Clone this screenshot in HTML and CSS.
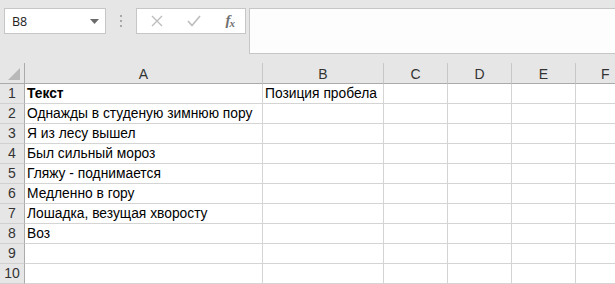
FILE: index.html
```html
<!DOCTYPE html>
<html lang="ru">
<head>
    <meta charset="UTF-8">
    <title>Книга1 - Excel</title>
    <link rel="stylesheet" href="styles.css">
</head>
<body>
    <div class="toolbar">
        <div class="name-box">
            <span>B8</span>
            <svg class="caret" width="9" height="5" viewBox="0 0 9 5"><path d="M0 0h9L4.5 5z" fill="#6b6b6b"/></svg>
        </div>
        <div class="grip"><i></i><i></i><i></i></div>
        <div class="fx-buttons">
            <svg width="12" height="12" viewBox="0 0 12 12"><path d="M1 1l10 10M11 1L1 11" stroke="#bdbdbd" stroke-width="1.4" fill="none"/></svg>
            <svg width="14" height="12" viewBox="0 0 14 12"><path d="M1 6l4 4.5L13 1" stroke="#bdbdbd" stroke-width="1.6" fill="none"/></svg>
            <span class="fx">f<sub>x</sub></span>
        </div>
        <div class="formula-input"></div>
    </div>
    <div class="sheet">
        <div class="corner"><span class="tri"></span></div>
        <div class="col-head">A</div>
        <div class="col-head">B</div>
        <div class="col-head">C</div>
        <div class="col-head">D</div>
        <div class="col-head">E</div>
        <div class="col-head last">F</div>

        <div class="row-head">1</div><div class="cell bold">Текст</div><div class="cell">Позиция пробела</div><div class="cell"></div><div class="cell"></div><div class="cell"></div><div class="cell"></div>
        <div class="row-head">2</div><div class="cell">Однажды в студеную зимнюю пору</div><div class="cell"></div><div class="cell"></div><div class="cell"></div><div class="cell"></div><div class="cell"></div>
        <div class="row-head">3</div><div class="cell">Я из лесу вышел</div><div class="cell"></div><div class="cell"></div><div class="cell"></div><div class="cell"></div><div class="cell"></div>
        <div class="row-head">4</div><div class="cell">Был сильный мороз</div><div class="cell"></div><div class="cell"></div><div class="cell"></div><div class="cell"></div><div class="cell"></div>
        <div class="row-head">5</div><div class="cell">Гляжу - поднимается</div><div class="cell"></div><div class="cell"></div><div class="cell"></div><div class="cell"></div><div class="cell"></div>
        <div class="row-head">6</div><div class="cell">Медленно в гору</div><div class="cell"></div><div class="cell"></div><div class="cell"></div><div class="cell"></div><div class="cell"></div>
        <div class="row-head">7</div><div class="cell">Лошадка, везущая хворосту</div><div class="cell"></div><div class="cell"></div><div class="cell"></div><div class="cell"></div><div class="cell"></div>
        <div class="row-head">8</div><div class="cell">Воз</div><div class="cell"></div><div class="cell"></div><div class="cell"></div><div class="cell"></div><div class="cell"></div>
        <div class="row-head">9</div><div class="cell"></div><div class="cell"></div><div class="cell"></div><div class="cell"></div><div class="cell"></div><div class="cell"></div>
        <div class="row-head">10</div><div class="cell"></div><div class="cell"></div><div class="cell"></div><div class="cell"></div><div class="cell"></div><div class="cell"></div>
    </div>
</body>
</html>
```

FILE: styles.css
```css
body {
    margin: 0;
    background: #e6e6e6;
    font-family: 'Liberation Sans', Arial, sans-serif;
    overflow: hidden;
}
.toolbar {
    display: flex;
    align-items: flex-start;
    height: 63px;
    padding: 8px 0 0 4px;
    box-sizing: border-box;
}
.name-box {
    width: 102px;
    height: 26px;
    background: #fff;
    border: 1px solid #c6c6c6;
    display: flex;
    align-items: center;
    justify-content: space-between;
    padding: 0 6px 0 7px;
    box-sizing: border-box;
    color: #222;
}
.name-box span {
    font-family: 'Open Sans', sans-serif;
    font-size: 12.5px;
}
.caret {
    margin-top: 1px;
}
.grip {
    width: 30px;
    height: 26px;
    display: flex;
    flex-direction: column;
    align-items: center;
    justify-content: center;
    gap: 3px;
}
.grip i {
    width: 2px;
    height: 2px;
    background: #a8a8a8;
}
.fx-buttons {
    width: 110px;
    height: 26px;
    background: #fff;
    border: 1px solid #c6c6c6;
    display: flex;
    align-items: center;
    justify-content: space-between;
    padding: 0 11px 0 14px;
    box-sizing: border-box;
}
.fx {
    font-family: 'Liberation Serif', serif;
    font-style: italic;
    font-weight: bold;
    font-size: 15px;
    color: #707070;
    letter-spacing: -1px;
    line-height: 1;
}
.fx sub {
    font-size: 11px;
    vertical-align: -2px;
}
.formula-input {
    flex: 1;
    height: 46px;
    margin-left: 3px;
    background: #fdfdfd;
    border: 1px solid #c6c6c6;
    border-right: none;
    box-sizing: border-box;
}
.sheet {
    display: grid;
    grid-template-columns: 24px 239px 121px 64px 64px 64px 60px;
    grid-auto-rows: 20px;
    grid-template-rows: 21px;
}
.corner {
    position: relative;
    border-right: 1px solid #ababab;
    border-bottom: 1px solid #ababab;
    box-sizing: border-box;
    width: 25px;
}
.tri {
    position: absolute;
    left: 8px;
    top: 5px;
    width: 0;
    height: 0;
    border-left: 12px solid transparent;
    border-bottom: 12px solid #b8b8b8;
}
.col-head {
    border-bottom: 1px solid #ababab;
    border-right: 1px solid #c8c8c8;
    box-sizing: border-box;
    text-align: center;
    font-size: 14px;
    line-height: 20px;
    color: #333;
    padding-top: 1px;
}
.sheet > .col-head:nth-child(2) {
    margin-left: 1px;
}
.col-head.last {
    border-right: none;
    text-align: left;
    padding-left: 25px;
}
.row-head {
    border-right: 1px solid #ababab;
    border-bottom: 1px solid #d0d0d0;
    box-sizing: border-box;
    width: 25px;
    text-align: center;
    font-size: 14px;
    line-height: 19px;
    color: #333;
}
.cell {
    background: #fff;
    border-right: 1px solid #d4d4d4;
    border-bottom: 1px solid #d4d4d4;
    box-sizing: border-box;
    font-size: 13.8px;
    line-height: 19px;
    padding-left: 2px;
    white-space: nowrap;
    color: #000;
}
.sheet > .cell:nth-child(7n+2) {
    margin-left: 1px;
}
.bold {
    font-weight: bold;
}
```
